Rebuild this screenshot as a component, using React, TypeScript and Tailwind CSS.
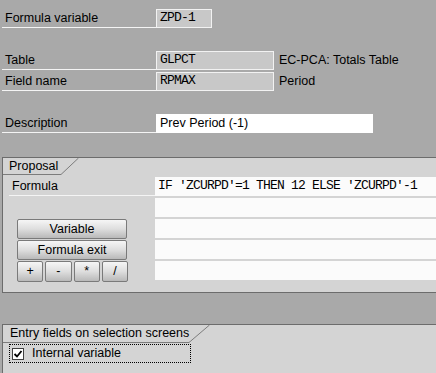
import React from "react";

function Row({ label, children }: { label: string; children?: React.ReactNode }) {
  return (
    <div className="flex h-[19px] items-stretch">
      <div className="ml-[2px] w-[154px] border-b border-[#f4f4f4] pl-[3px] leading-[18px]">{label}</div>
      {children}
    </div>
  );
}

function Field({ w, value, white }: { w: string; value: string; white?: boolean }) {
  return (
    <div
      className={`${w} h-[19px] border ${
        white
          ? "border-white bg-white font-['Liberation_Sans',Arial,sans-serif] text-[12.5px] leading-[17px]"
          : "border-[#f2f2f2] bg-[#c8c8c8] font-['Liberation_Mono',monospace] text-[13px] tracking-[-0.8px] leading-[16px]"
      } pl-[3px] whitespace-nowrap`}
    >
      {value}
    </div>
  );
}

function Btn({ children, className = "" }: { children: React.ReactNode; className?: string }) {
  return (
    <div
      className={`h-[20px] rounded-[2px] border border-[#7a7a7a] bg-linear-to-b from-[#f6f6f6] via-[#dedede] to-[#b9b9b9] text-center leading-[18px] ${className}`}
    >
      {children}
    </div>
  );
}

export default function App() {
  return (
    <div className="flex h-[373px] w-[436px] flex-col overflow-hidden bg-[#a9a9a9] font-['Liberation_Sans',Arial,sans-serif] text-[12.5px] leading-[19px] text-black">
      <div className="pt-[9px]">
        <Row label="Formula variable">
          <Field w="w-[56px]" value="ZPD-1" />
        </Row>
      </div>
      <div className="mt-[23px]">
        <Row label="Table">
          <Field w="w-[118px]" value="GLPCT" />
          <span className="ml-[5px] leading-[19px]">EC-PCA: Totals Table</span>
        </Row>
      </div>
      <div className="mt-[2px]">
        <Row label="Field name">
          <Field w="w-[118px]" value="RPMAX" />
          <span className="ml-[5px] leading-[19px]">Period</span>
        </Row>
      </div>
      <div className="mt-[23px]">
        <Row label="Description">
          <Field w="w-[217px]" value="Prev Period (-1)" white />
        </Row>
      </div>

      {/* Proposal group */}
      <div className="ml-[2px] mt-[24px] border-b border-l border-t border-[#6c6c6c] bg-[#d4d4d4] pb-[12px]">
        <div className="flex h-[17px]">
          <div className="w-[58px] border-b border-[#7c7c7c] pl-[6px] leading-[16px]">Proposal</div>
          <svg width="18" height="17" className="block">
            <line x1="0" y1="16.5" x2="17.5" y2="0" stroke="#7c7c7c" strokeWidth="1" />
          </svg>
        </div>
        <div className="mt-[2px] flex flex-col gap-[2px]">
          <div className="flex h-[19px]">
            <div className="w-[152px]">
              <div className="ml-[6px] h-[19px] border-b border-[#f4f4f4] pl-[3px] leading-[18px]">Formula</div>
            </div>
            <div className="flex-1 bg-[#fbfbfb] pl-[3px] font-['Liberation_Mono',monospace] text-[13px] leading-[18px] tracking-[-0.8px] whitespace-nowrap">
              IF 'ZCURPD'=1 THEN 12 ELSE 'ZCURPD'-1
            </div>
          </div>
          <div className="flex h-[19px]">
            <div className="w-[152px]" />
            <div className="flex-1 bg-[#fbfbfb]" />
          </div>
          <div className="flex h-[19px]">
            <div className="flex w-[152px] items-center">
              <Btn className="ml-[14px] w-[110px]">Variable</Btn>
            </div>
            <div className="flex-1 bg-[#fbfbfb]" />
          </div>
          <div className="flex h-[19px]">
            <div className="flex w-[152px] items-center">
              <Btn className="ml-[14px] w-[110px]">Formula exit</Btn>
            </div>
            <div className="flex-1 bg-[#fbfbfb]" />
          </div>
          <div className="flex h-[19px]">
            <div className="flex w-[152px] items-center">
              <div className="ml-[14px] mt-[1px] grid w-[111px] grid-cols-4 gap-[2px]">
                <Btn className="h-[21px] leading-[19px]">+</Btn>
                <Btn className="h-[21px] leading-[19px]">-</Btn>
                <Btn className="h-[21px] leading-[19px]">*</Btn>
                <Btn className="h-[21px] leading-[19px]">/</Btn>
              </div>
            </div>
            <div className="flex-1 bg-[#fbfbfb]" />
          </div>
        </div>
      </div>

      {/* Entry fields group */}
      <div className="ml-[2px] mt-[31px] flex-1 border-l border-t border-[#6c6c6c] bg-[#d4d4d4]">
        <div className="flex h-[18px]">
          <div className="w-[186px] border-b border-[#7c7c7c] pl-[7px] leading-[17px] whitespace-nowrap">
            Entry fields on selection screens
          </div>
          <svg width="21" height="18" className="block">
            <line x1="0" y1="17.5" x2="20.5" y2="0" stroke="#7c7c7c" strokeWidth="1" />
          </svg>
        </div>
        <div className="ml-[6px] mt-[1px] flex h-[19px] w-[182px] items-center border border-dotted border-black pl-[2px]">
          <div className="flex h-[12px] w-[12px] items-center justify-center border border-[#404040] bg-white">
            <svg width="10" height="10" viewBox="0 0 10 10" className="block">
              <path d="M1.5 5 L4 7.5 L8.5 2" fill="none" stroke="#000" strokeWidth="1.8" />
            </svg>
          </div>
          <span className="ml-[8px] leading-[17px]">Internal variable</span>
        </div>
      </div>
    </div>
  );
}
